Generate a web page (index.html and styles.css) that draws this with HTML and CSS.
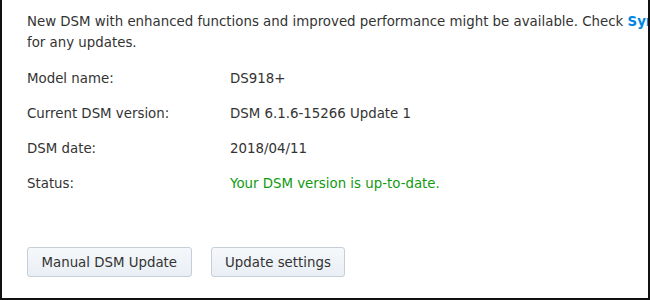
FILE: index.html
```html
<!DOCTYPE html>
<html lang="en">
<head>
    <meta charset="UTF-8">
    <meta name="viewport" content="width=device-width, initial-scale=1.0">
    <link rel="stylesheet" href="styles.css">
    <title>DSM Update</title>
</head>
<body>
    <div class="panel">
        <p class="notice">
            <span class="first-line">New DSM with enhanced functions and improved performance might be available. Check <a href="#">Synology Download Center</a></span><br>
            for any updates.
        </p>
        <div class="info">
            <div class="label">Model name:</div>
            <div class="value">DS918+</div>
            <div class="label">Current DSM version:</div>
            <div class="value">DSM 6.1.6-15266 Update 1</div>
            <div class="label">DSM date:</div>
            <div class="value">2018/04/11</div>
            <div class="label">Status:</div>
            <div class="value status">Your DSM version is up-to-date.</div>
        </div>
        <div class="actions">
            <button class="btn">Manual DSM Update</button>
            <button class="btn">Update settings</button>
        </div>
    </div>
</body>
</html>
```

FILE: styles.css
```css
body {
    margin: 0;
    padding: 0;
    background-color: #fff;
    font-family: "DejaVu Sans", Verdana, sans-serif;
    font-size: 13.35px;
    color: #333;
}

.panel {
    box-sizing: border-box;
    width: 650px;
    height: 300px;
    padding: 11px 0 0 25px;
    border-left: 2px solid #111;
    border-right: 2px solid #111;
    border-bottom: 2px solid #111;
    overflow: hidden;
}

.notice {
    margin: 0;
    line-height: 21px;
}

.first-line {
    white-space: nowrap;
}

.notice a {
    color: #0086e5;
    font-weight: bold;
    text-decoration: none;
}

.info {
    display: grid;
    grid-template-columns: 203px auto;
    grid-auto-rows: 35px;
    align-items: center;
    margin-top: 8px;
    line-height: 35px;
}

.status {
    color: #109a10;
}

.actions {
    display: flex;
    gap: 19px;
    margin-top: 46px;
}

.btn {
    height: 30px;
    padding: 0 13.5px;
    font-family: "DejaVu Sans", Verdana, sans-serif;
    font-size: 13.35px;
    color: #333;
    background: linear-gradient(#f5f8fb, #e9eff5);
    border: 1px solid #c5cfda;
    border-radius: 3px;
    cursor: pointer;
}
```
